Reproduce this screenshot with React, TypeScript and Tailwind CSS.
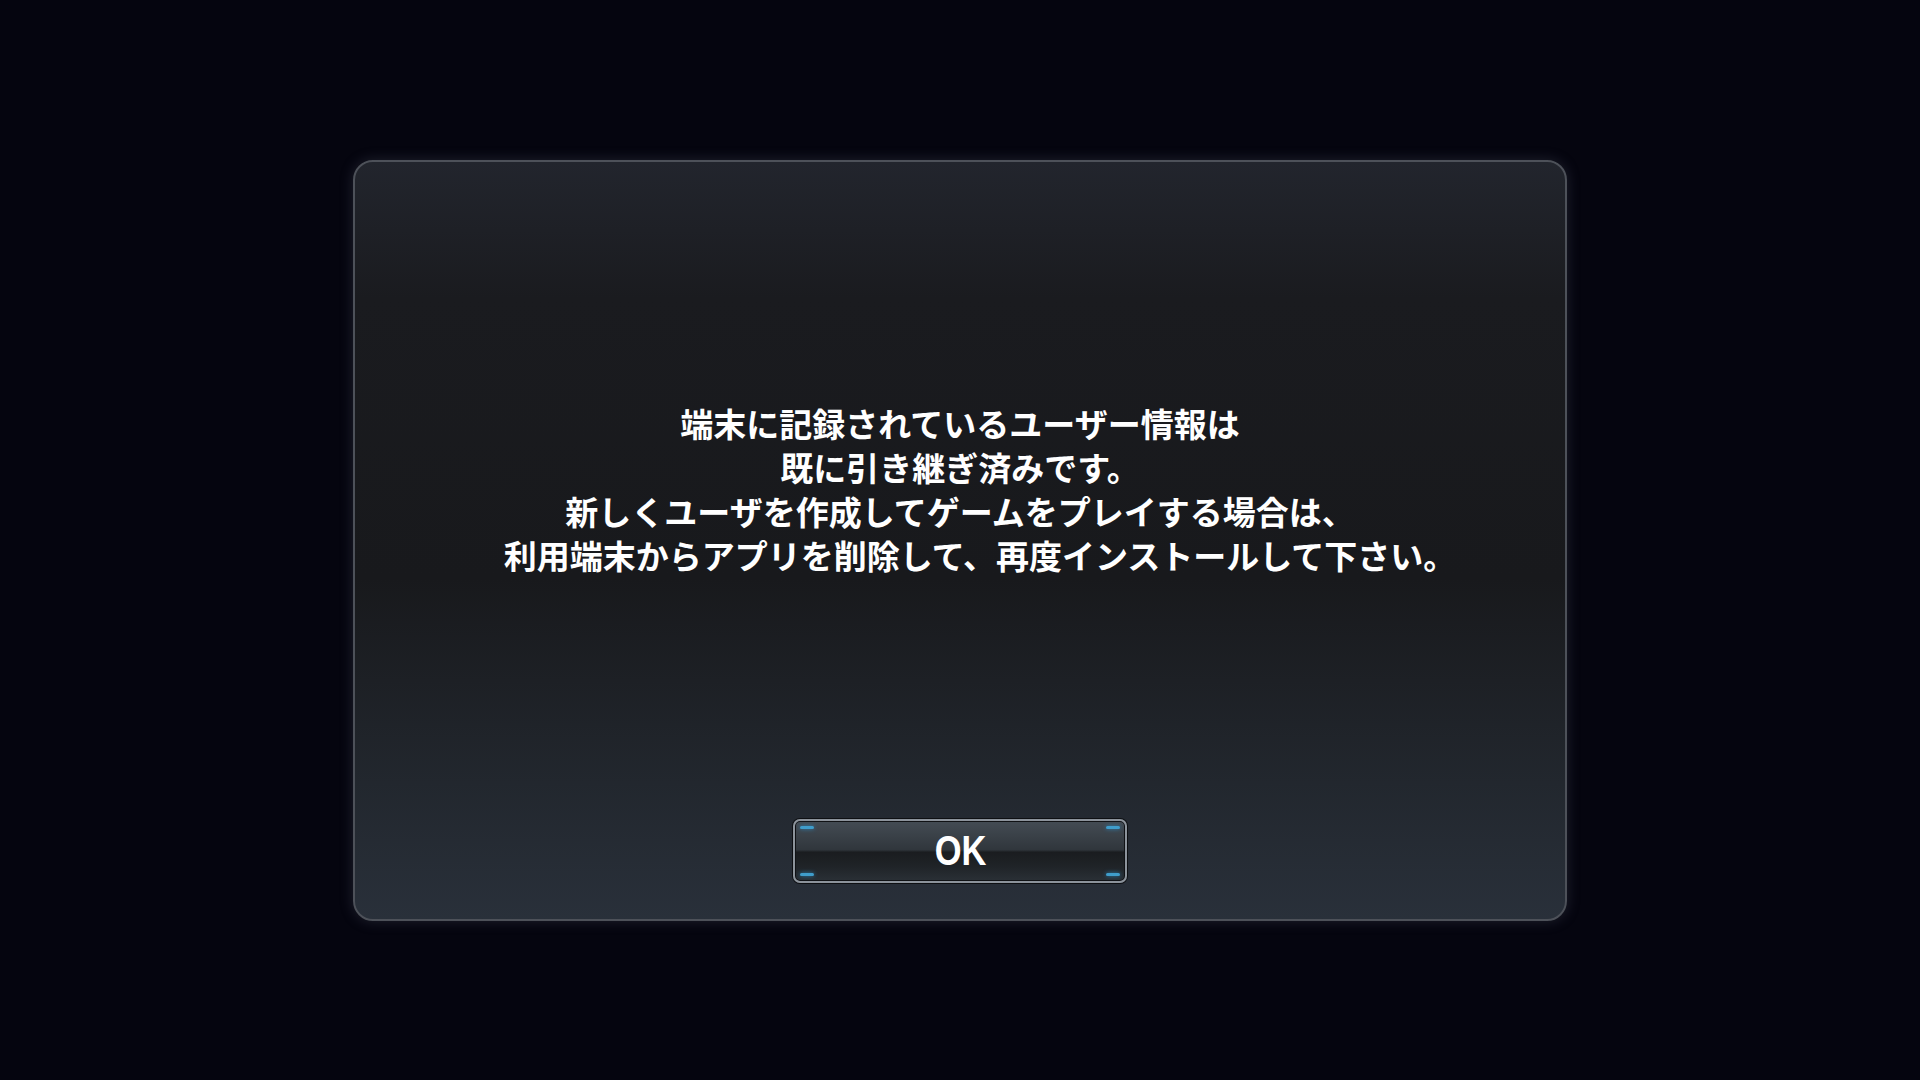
const lines = [
  { text: "端末に記録されているユーザー情報は", pad: "" },
  { text: "既に引き継ぎ済みです。", pad: "" },
  { text: "新しくユーザを作成してゲームをプレイする場合は、", pad: "" },
  { text: "利用端末からアプリを削除して、再度インストールして下さい。", pad: "pl-[40px]" },
];

function Accent({ pos }: { pos: string }) {
  return (
    <span
      className={`absolute h-[3px] w-[14px] rounded-full bg-[#3f9dcb] shadow-[0_0_4px_#2a7fb0] ${pos}`}
    />
  );
}

function OkButton() {
  return (
    <button className="relative flex h-[64px] w-[334px] items-center justify-center rounded-[7px] border-2 border-[#8c939b] bg-[linear-gradient(to_bottom,#444c54_0%,#30363c_48%,#1a1c1f_52%,#1f2327_75%,#2a3036_100%)] shadow-[0_0_0_1px_#0e1013,inset_0_0_0_1px_#101215]">
      <Accent pos="left-[5px] top-[5px]" />
      <Accent pos="right-[5px] top-[5px]" />
      <Accent pos="left-[5px] bottom-[5px]" />
      <Accent pos="right-[5px] bottom-[5px]" />
      <span className="inline-block scale-x-[0.82] text-[42px] leading-none font-semibold text-white font-['Liberation_Sans',Arial,sans-serif]">
        OK
      </span>
    </button>
  );
}

export default function App() {
  return (
    <main className="flex h-screen w-full items-center justify-center bg-[#05050f]">
      <div className="flex h-[761px] w-[1214px] flex-col items-center rounded-[20px] border-2 border-[#4d5159] bg-[linear-gradient(to_bottom,#22252d_0%,#1a1b1f_18%,#18191c_55%,#22272e_82%,#29303a_100%)] pt-[239px] pb-[36px] shadow-[0_0_14px_rgba(110,120,140,0.25)]">
        <div className="flex flex-col items-center text-[33px] leading-[44px] font-bold text-white font-['Noto_Sans_CJK_JP','Noto_Sans',sans-serif]">
          {lines.map((l) => (
            <p key={l.text} className={l.pad}>
              {l.text}
            </p>
          ))}
        </div>
        <div className="mt-auto">
          <OkButton />
        </div>
      </div>
    </main>
  );
}
